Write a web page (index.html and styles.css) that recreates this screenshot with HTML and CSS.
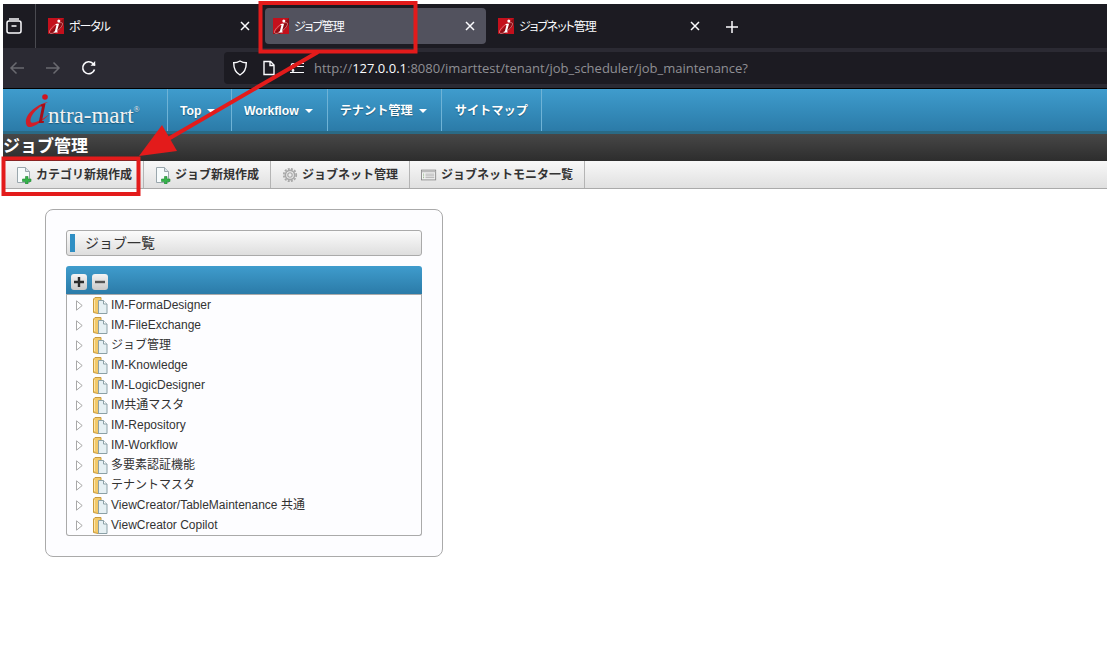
FILE: index.html
```html
<!DOCTYPE html>
<html lang="ja">
<head>
	<meta charset="utf-8">
	<title>ジョブ管理</title>
	<link rel="stylesheet" href="styles.css">
</head>
<body>
	<svg class="defs" width="0" height="0">
		<symbol id="favicon" viewBox="0 0 16 16">
			<rect width="16" height="16" fill="#c4101c"/>
			<path d="M0 16 16 0v7L7 16z" fill="#8e0c14"/>
			<ellipse cx="8" cy="10" rx="8" ry="3" transform="rotate(-38 8 10)" fill="none" stroke="#e9a0a0" stroke-width=".6"/>
			<circle cx="10.800" cy="3" r="1.500" fill="#fff"/>
			<path d="M7.800 6h3.200L8.900 13.500h1l-.3 1H5.600l.3-1h.9L8.500 7H7.500z" fill="#fff"/>
		</symbol>
		<symbol id="close" viewBox="0 0 10 10">
			<path d="M1 1l8 8M9 1l-8 8" stroke="#fbfbfe" stroke-width="1.500" fill="none"/>
		</symbol>
		<symbol id="page-add" viewBox="0 0 16 18">
			<path d="M1.500 1.500h8l4 4v11h-12z" fill="#f7fbfc" stroke="#9aa7ad"/>
			<path d="M9.500 1.500v4h4" fill="#d9e4e8" stroke="#9aa7ad"/>
			<path d="M9.500 10.500h2.500v2.500h3v2.500h-3V18H9.500v-2.500h-3V13h3z" fill="#35b24a" stroke="#1f8a33" stroke-width=".6"/>
		</symbol>
		<symbol id="tree-folder" viewBox="0 0 15 17">
			<path d="M.5 2V15.500L5 16.500H8V.5H2z" fill="#f3c969" stroke="#c99a3b"/>
			<path d="M1.500 3V14" stroke="#fbe6ae"/>
			<path d="M5.500 16.500V3.500H10.500L14 7V16.500z" fill="#e6f0f3" stroke="#8ba0a6"/>
			<path d="M10.500 3.500V7H14" fill="#fff" stroke="#8ba0a6"/>
		</symbol>
		<symbol id="twisty" viewBox="0 0 7 11">
			<path d="M.5 .8 6.200 5.500.5 10.200z" fill="#fff" stroke="#a8a8a8"/>
		</symbol>
	</svg>

	<div class="browser">
		<div class="tabstrip">
			<div class="sidebar-btn">
				<svg width="16" height="16" viewBox="0 0 16 16" fill="none" stroke="#fbfbfe" stroke-width="1.500"><rect x="1" y="3" width="14" height="12" rx="2"/><path d="M3 1h10M5.500 8h5"/></svg>
			</div>
			<div class="tab">
				<svg class="favicon"><use href="#favicon"/></svg>
				<span class="tab-name">ポータル</span>
				<svg class="tab-close"><use href="#close"/></svg>
			</div>
			<div class="tab tab-active">
				<svg class="favicon"><use href="#favicon"/></svg>
				<span class="tab-name">ジョブ管理</span>
				<svg class="tab-close"><use href="#close"/></svg>
			</div>
			<div class="tab">
				<svg class="favicon"><use href="#favicon"/></svg>
				<span class="tab-name">ジョブネット管理</span>
				<svg class="tab-close"><use href="#close"/></svg>
			</div>
			<svg class="new-tab" width="14" height="14" viewBox="0 0 14 14"><path d="M7 1v12M1 7h12" stroke="#fbfbfe" stroke-width="1.500"/></svg>
		</div>
		<div class="urlrow">
			<div class="nav-btns">
				<svg width="16" height="16" viewBox="0 0 16 16" fill="none" stroke="#6a6a70" stroke-width="1.500"><path d="M15 8H2M7.500 2.500 2 8l5.500 5.500"/></svg>
				<svg width="16" height="16" viewBox="0 0 16 16" fill="none" stroke="#6a6a70" stroke-width="1.500"><path d="M1 8h13M8.500 2.500 14 8l-5.500 5.500"/></svg>
				<svg width="16" height="16" viewBox="0 0 16 16" fill="none" stroke="#fbfbfe" stroke-width="1.600"><path d="M13.500 9.500A6 6 0 1 1 12 3.500L14 5.500"/><path d="M14.200 1v4.700H9.500" fill="#fbfbfe" stroke="none"/></svg>
			</div>
			<div class="urlbar">
				<svg width="16" height="16" viewBox="0 0 16 16" fill="none" stroke="#fbfbfe" stroke-width="1.400"><path d="M8 1c2 1.200 4 1.800 6.300 1.800 0 6-2 10-6.300 12.200C3.700 12.800 1.700 8.800 1.700 2.800 4 2.800 6 2.200 8 1z"/></svg>
				<svg class="page-glyph" width="14" height="16" viewBox="0 0 14 16" fill="none" stroke="#fbfbfe" stroke-width="1.400"><path d="M2 1.500h6.500l3.500 3.500v9.500H2zM8 1.500V5.500h4"/></svg>
				<svg width="16" height="16" viewBox="0 0 16 16" fill="none" stroke="#fbfbfe" stroke-width="1.200"><circle cx="4" cy="5.500" r="1.800"/><path d="M1 12.500h14M8 6.500h7M8 3.500h7"/><circle cx="4" cy="10.500" r=".8"/></svg>
				<span class="url"><span class="url-dim">http://</span>127.0.0.1<span class="url-dim">:8080/imarttest/tenant/job_scheduler/job_maintenance?</span></span>
			</div>
		</div>

		<div class="page">
			<div class="menubar">
				<div class="logo">
					<svg class="logo-mark" width="36" height="33" viewBox="0 0 36 33">
						<path d="M1.500 31C-2 23 9 11 23 8 13 13 5 21 5.500 27 6 30.500 12 29 25 20 12 32 3.500 36 1.500 31z" fill="#d01e28"/>
						<circle cx="20" cy="3" r="2.800" fill="#d01420"/>
						<path d="M16 10.500 20.500 9.500 17 27h2l-.4 2h-5L17 12.500h-1.500z" fill="#a50f18"/>
					</svg>
					<span class="logo-text">ntra-mart<sup>®</sup></span>
				</div>
				<div class="menu-item menu-top">Top<i class="caret"></i></div>
				<div class="menu-item menu-drop">Workflow<i class="caret"></i></div>
				<div class="menu-item menu-drop">テナント管理<i class="caret"></i></div>
				<div class="menu-item">サイトマップ</div>
			</div>
			<h1 class="page-title">ジョブ管理</h1>
			<div class="toolbar">
				<a class="tool tool-first"><svg class="tool-icon"><use href="#page-add"/></svg>カテゴリ新規作成</a>
				<a class="tool"><svg class="tool-icon"><use href="#page-add"/></svg>ジョブ新規作成</a>
				<a class="tool">
					<svg class="tool-icon" viewBox="0 0 18 18" fill="none" stroke="#a8a8a8"><circle cx="9" cy="9" r="2.500" stroke-width="1.300"/><circle cx="9" cy="9" r="5.200" stroke-width="1.800"/><circle cx="9" cy="9" r="7" stroke-width="2" stroke-dasharray="2.200 1.500"/></svg>
					ジョブネット管理
				</a>
				<a class="tool">
					<svg class="tool-icon" viewBox="0 0 18 18" fill="none"><rect x=".5" y="3.500" width="16" height="11" fill="#f4f4f4" stroke="#8a8a8a"/><path d="M1 4.500h15v1.500H1z" fill="#bbb"/><path d="M5 8h10M5 10h10M5 12h10" stroke="#aaa"/><path d="M2.500 8h1M2.500 10h1M2.500 12h1" stroke="#6a9a5a"/></svg>
					ジョブネットモニタ一覧
				</a>
			</div>

			<div class="panel">
				<div class="panel-title"><span class="title-mark"></span>ジョブ一覧</div>
				<div class="tree-head">
					<span class="tree-btn"><svg width="16" height="16" viewBox="0 0 16 16"><path d="M8 3v10M3 8h10" stroke="#2b2b2b" stroke-width="2.400"/></svg></span>
					<span class="tree-btn"><svg width="16" height="16" viewBox="0 0 16 16"><path d="M3 8h10" stroke="#555" stroke-width="2.400"/></svg></span>
				</div>
				<ul class="tree">
					<li><svg class="twisty"><use href="#twisty"/></svg><svg class="folder"><use href="#tree-folder"/></svg>IM-FormaDesigner</li>
					<li><svg class="twisty"><use href="#twisty"/></svg><svg class="folder"><use href="#tree-folder"/></svg>IM-FileExchange</li>
					<li><svg class="twisty"><use href="#twisty"/></svg><svg class="folder"><use href="#tree-folder"/></svg>ジョブ管理</li>
					<li><svg class="twisty"><use href="#twisty"/></svg><svg class="folder"><use href="#tree-folder"/></svg>IM-Knowledge</li>
					<li><svg class="twisty"><use href="#twisty"/></svg><svg class="folder"><use href="#tree-folder"/></svg>IM-LogicDesigner</li>
					<li><svg class="twisty"><use href="#twisty"/></svg><svg class="folder"><use href="#tree-folder"/></svg>IM共通マスタ</li>
					<li><svg class="twisty"><use href="#twisty"/></svg><svg class="folder"><use href="#tree-folder"/></svg>IM-Repository</li>
					<li><svg class="twisty"><use href="#twisty"/></svg><svg class="folder"><use href="#tree-folder"/></svg>IM-Workflow</li>
					<li><svg class="twisty"><use href="#twisty"/></svg><svg class="folder"><use href="#tree-folder"/></svg>多要素認証機能</li>
					<li><svg class="twisty"><use href="#twisty"/></svg><svg class="folder"><use href="#tree-folder"/></svg>テナントマスタ</li>
					<li><svg class="twisty"><use href="#twisty"/></svg><svg class="folder"><use href="#tree-folder"/></svg>ViewCreator/TableMaintenance 共通</li>
					<li><svg class="twisty"><use href="#twisty"/></svg><svg class="folder"><use href="#tree-folder"/></svg>ViewCreator Copilot</li>
				</ul>
			</div>
		</div>
	</div>

	<!-- red callouts drawn on top of the screenshot -->
	<svg class="callouts" width="1107" height="656" viewBox="0 0 1107 656" fill="none" stroke="#e31b1b" stroke-width="4">
		<rect x="260.500" y="3" width="155" height="48.500"/>
		<rect x="3.500" y="158.500" width="135" height="35.500"/>
		<path d="M318 52 163 142"/>
		<path d="M139 156 177 151 162 125z" fill="#e31b1b" stroke="none"/>
	</svg>
</body>
</html>
```

FILE: styles.css
```css
* {
	box-sizing: border-box;
}
html, body {
	margin: 0;
	height: 100%;
	background: #fff;
	overflow: hidden;
}
body {
	position: relative;
	padding: 4px 0 0 3px;
	font-family: "Liberation Sans", "Noto Sans CJK JP", sans-serif;
	font-size: 12px;
	color: #333;
}
.defs {
	position: absolute;
}
svg {
	display: block;
	flex: none;
}

/* browser chrome */
.tabstrip {
	display: flex;
	align-items: flex-start;
	height: 44px;
	background: #1c1b22;
	color: #fbfbfe;
}
.sidebar-btn {
	display: flex;
	align-items: center;
	width: 33px;
	height: 44px;
	padding-left: 3px;
	border-right: 1px solid #4a4a50;
}
.tab {
	display: flex;
	align-items: center;
	width: 221px;
	height: 36px;
	margin: 4px 0 0 4px;
	padding: 0 11px 0 8px;
	border-radius: 4px;
	font-size: 12px;
	font-feature-settings: "palt";
	letter-spacing: -1.100px;
	line-height: 16px;
}
.tab-active {
	background: #52525e;
}
.favicon {
	width: 16px;
	height: 16px;
}
.tab-name {
	flex: 1;
	margin: 1px 0 0 5px;
}
.tab-close {
	width: 10px;
	height: 10px;
}
.new-tab {
	margin: 16px 0 0 14px;
}
.urlrow {
	display: flex;
	align-items: center;
	height: 41px;
	background: #2b2a33;
	border-bottom: 1px solid #000;
}
.nav-btns {
	display: flex;
	align-items: center;
	gap: 20px;
	width: 221px;
	padding-left: 6px;
}
.urlbar {
	display: flex;
	align-items: center;
	gap: 13px;
	flex: 1;
	height: 32px;
	padding-left: 8px;
	background: #1c1b22;
	border-radius: 4px 0 0 4px;
}
.page-glyph {
	margin-left: 1px;
}
.url {
	margin-left: -4px;
	font-family: "Open Sans", sans-serif;
	font-size: 13px;
	color: #fbfbfe;
}
.url-dim {
	color: #8f8f94;
}

/* application */
.menubar {
	display: flex;
	height: 45px;
	background: linear-gradient(#3f9ccd, #2b7ba8);
	border-bottom: 3px solid #2a6a85;
	color: #fff;
	font-size: 12.200px;
	font-weight: bold;
}
.logo {
	display: flex;
	align-items: flex-end;
	width: 165px;
	padding: 0 0 4px 22px;
	border-right: 1px solid #6fb3d6;
	font-weight: normal;
}
.logo-mark {
	margin-right: -13px;
}
.logo-text {
	font-family: "Liberation Serif", serif;
	font-size: 23px;
	line-height: 23px;
	color: #f2f2f2;
	text-shadow: 0 1px 1px #1c5a7c;
}
.logo-text sup {
	font-size: 8px;
	line-height: 0;
	vertical-align: 11px;
}
.menu-item {
	display: flex;
	align-items: center;
	padding: 1px 13px 0;
	border-right: 1px solid #6fb3d6;
	line-height: 18px;
	text-shadow: 0 1px 1px #1c5a7c;
}
.menu-top {
	width: 64px;
	padding-left: 12px;
}
.menu-drop {
	padding-left: 12px;
	padding-right: 14px;
}
.caret {
	width: 0;
	height: 0;
	margin-left: 6px;
	border-left: 4px solid transparent;
	border-right: 4px solid transparent;
	border-top: 4px solid #fff;
}
.page-title {
	height: 27px;
	margin: 0;
	background: linear-gradient(#474747, #2d2d2d);
	color: #fff;
	font-size: 17px;
	line-height: 25px;
}
.toolbar {
	display: flex;
	height: 28px;
	background: linear-gradient(#f8f8f8, #e0e0e0);
	border-bottom: 1px solid #aaa;
	font-weight: bold;
	line-height: 16px;
	color: #333;
}
.tool {
	display: flex;
	align-items: center;
	gap: 4px;
	height: 27px;
	padding: 0 11px;
	border-right: 1px solid #b4b4b4;
}
.tool-first {
	padding-left: 13px;
}
.tool-icon {
	width: 16px;
	height: 18px;
}

.panel {
	width: 398px;
	height: 348px;
	margin: 20px 0 0 42px;
	padding: 20px;
	background: #fdfdff;
	border: 1px solid #aaa;
	border-radius: 8px;
}
.panel-title {
	display: flex;
	align-items: center;
	gap: 10px;
	height: 26px;
	padding-left: 3px;
	background: linear-gradient(#fbfbfb, #dedede);
	border: 1px solid #aaa;
	border-radius: 3px;
	font-size: 14px;
	line-height: 22px;
}
.title-mark {
	width: 5px;
	height: 18px;
	background: #2f8fc4;
}
.tree-head {
	display: flex;
	align-items: center;
	gap: 5px;
	height: 29px;
	margin-top: 10px;
	padding: 3px 0 0 5px;
	background: linear-gradient(#3f9ccd, #2b7ba8);
	border-radius: 3px 3px 0 0;
	border-bottom: 1px solid #aaa;
}
.tree-btn {
	width: 16px;
	height: 16px;
	background: linear-gradient(#f4f4f4, #c8c8c8);
	border-radius: 3px;
}
.tree {
	height: 241px;
	margin: 0;
	padding: 0;
	list-style: none;
	background: #fdfdff;
	border: 1px solid #aaa;
	border-top: none;
	border-radius: 0 0 3px 3px;
}
.tree li {
	display: flex;
	align-items: center;
	height: 20px;
	padding-left: 9px;
	line-height: 20px;
	color: #333;
}
.twisty {
	width: 7px;
	height: 11px;
}
.folder {
	width: 15px;
	height: 17px;
	margin: 0 3px 0 10px;
}

.callouts {
	position: absolute;
	top: 0;
	left: 0;
}
```
